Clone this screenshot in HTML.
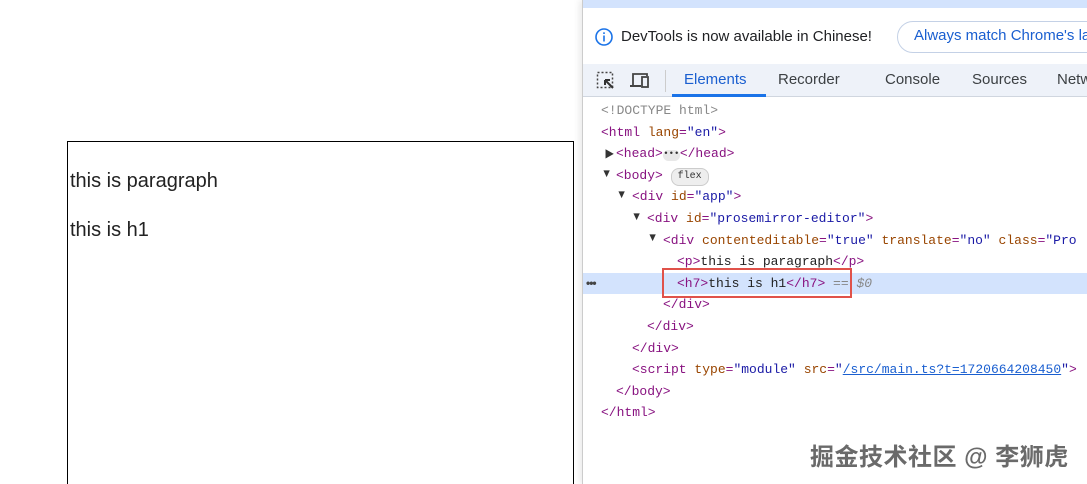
<!DOCTYPE html>
<html style="overflow:hidden"><head><style>
html,body{margin:0;width:1087px;height:484px;overflow:hidden}
body{background:#fff;position:relative;font-family:"Liberation Sans",sans-serif}
.box{position:absolute;left:67px;top:141px;width:507px;height:360px;border:1px solid #000;box-sizing:border-box}
.box p{position:absolute;left:2px;margin:0;font-size:20px;color:#222}
.dt{position:absolute;left:582px;top:0;width:505px;height:484px;background:#fff;border-left:1px solid #ccc;box-shadow:-3px 0 6px rgba(0,0,0,.08)}
.top{height:8px;background:#d3e3fd}
.info{position:absolute;top:8px;left:0;right:0;height:56px;}
.tabs{position:absolute;top:64px;left:0;right:0;height:32px;background:#eef2f9;border-bottom:1px solid #d0d6df;font-size:15px;color:#3c4043}
.tab{position:absolute;top:7px}
.code{position:absolute;left:0;top:100px;font-family:"Liberation Mono",monospace;font-size:13px;color:#881280}
.l{position:absolute;white-space:pre;height:21.6px;line-height:21.6px}
.a{color:#994500}.v{color:#1a1aa6}.g{color:#888}
.tri{position:absolute;font-size:12px;color:#333;transform:scaleX(0.9)}
.wm{position:absolute;left:810px;top:437px;font-family:"Liberation Sans","Noto Sans CJK SC",sans-serif;font-size:24px;font-weight:bold;color:#6a6a6a;text-shadow:0 0 2px #fff,0 0 2px #fff;letter-spacing:0.5px;white-space:nowrap}
</style></head><body>
<div class="box"><p style="top:28px">this is paragraph</p><p style="top:77px">this is h1</p></div>
<div class="dt">
<div class="top"></div>
<div class="info">
<svg style="position:absolute;left:12px;top:20px" width="18" height="18" viewBox="0 0 18 18"><circle cx="9" cy="9" r="8" fill="none" stroke="#1a73e8" stroke-width="1.6"/><rect x="8.2" y="7.5" width="1.6" height="6" fill="#1a73e8"/><rect x="8.2" y="4.3" width="1.6" height="1.7" fill="#1a73e8"/></svg>
<div style="position:absolute;left:38px;top:20px;font-size:15px;color:#202124">DevTools is now available in Chinese!</div>
<div style="position:absolute;left:314px;top:13px;width:220px;height:30px;border:1px solid #c4d1e6;border-radius:16px;"></div>
<div style="position:absolute;left:331px;top:19px;font-size:15px;color:#1a5fd0;white-space:nowrap">Always match Chrome's la</div>
</div>
<div class="tabs">
<svg style="position:absolute;left:13px;top:7px" width="20" height="20" viewBox="0 0 20 20"><rect x="1.5" y="1.5" width="15" height="15" fill="none" stroke="#444" stroke-width="1.5" stroke-dasharray="2 2"/><path d="M9 9 L17 17 M9 9 L9 14 M9 9 L14 9" stroke="#333" stroke-width="2" fill="none"/></svg>
<svg style="position:absolute;left:46px;top:7px" width="22" height="20" viewBox="0 0 22 20"><path d="M4 14 V3 H18 V5" stroke="#444" stroke-width="1.8" fill="none"/><path d="M1 15 H12" stroke="#444" stroke-width="2"/><rect x="13" y="6" width="6" height="10" fill="none" stroke="#444" stroke-width="1.8"/></svg>
<div style="position:absolute;left:82px;top:6px;width:1px;height:22px;background:#ccc"></div>
<div class="tab" style="left:101px;color:#1a5fd0">Elements</div>
<div style="position:absolute;left:89px;top:30px;width:94px;height:3px;background:#1a73e8"></div>
<div class="tab" style="left:195px">Recorder</div>
<div class="tab" style="left:302px">Console</div>
<div class="tab" style="left:389px">Sources</div>
<div class="tab" style="left:474px">Netw</div>
</div>
</div>
<div style="position:absolute;left:583px;top:273px;width:504px;height:21px;background:#d3e3fd"></div>
<div style="position:absolute;left:662px;top:268px;width:186px;height:26px;border:2px solid #e0524a"></div>
<div style="position:absolute;left:586px;top:276px;font-size:12px;color:#444;font-weight:bold;letter-spacing:-1px">•••</div>
<div class="code">
<div class="l g" style="left:601px;top:0">&lt;!DOCTYPE html&gt;</div>
<div class="l" style="left:601px;top:21.6px">&lt;html <span class="a">lang</span>=<span class="v">"en"</span>&gt;</div>
<div class="tri" style="left:605px;top:46px">▶</div>
<div class="l" style="left:616px;top:43.2px">&lt;head&gt;<span style="display:inline-block;width:17px;height:11px;background:#e8e8e8;border-radius:6px;font-size:9px;line-height:9px;color:#333;text-align:center;vertical-align:1px">•••</span>&lt;/head&gt;</div>
<div class="tri" style="left:603px;top:67px">▼</div>
<div class="l" style="left:616px;top:64.8px">&lt;body&gt; <span style="display:inline-block;width:36px;height:16px;line-height:16px;border:1px solid #ccc;background:#eee;border-radius:8px;font-size:10px;color:#333;text-align:center;vertical-align:1px">flex</span></div>
<div class="tri" style="left:618px;top:88px">▼</div>
<div class="l" style="left:632px;top:86.4px">&lt;div <span class="a">id</span>=<span class="v">"app"</span>&gt;</div>
<div class="tri" style="left:633px;top:110px">▼</div>
<div class="l" style="left:647px;top:108px">&lt;div <span class="a">id</span>=<span class="v">"prosemirror-editor"</span>&gt;</div>
<div class="tri" style="left:649px;top:131px">▼</div>
<div class="l" style="left:663px;top:129.6px">&lt;div <span class="a">contenteditable</span>=<span class="v">"true"</span> <span class="a">translate</span>=<span class="v">"no"</span> <span class="a">class</span>=<span class="v">"Pro</span></div>
<div class="l" style="left:677px;top:151.2px">&lt;p&gt;<span style="color:#222">this is paragraph</span>&lt;/p&gt;</div>
<div class="l" style="left:677px;top:172.8px">&lt;h7&gt;<span style="color:#222">this is h1</span>&lt;/h7&gt; <span class="g" style="font-style:italic">== $0</span></div>
<div class="l" style="left:663px;top:194.4px">&lt;/div&gt;</div>
<div class="l" style="left:647px;top:216px">&lt;/div&gt;</div>
<div class="l" style="left:632px;top:237.6px">&lt;/div&gt;</div>
<div class="l" style="left:632px;top:259.2px">&lt;script <span class="a">type</span>=<span class="v">"module"</span> <span class="a">src</span>=<span class="v">"<u style="color:#1a5fd0">/src/main.ts?t=1720664208450</u>"</span>&gt;</div>
<div class="l" style="left:616px;top:280.8px">&lt;/body&gt;</div>
<div class="l" style="left:601px;top:302.4px">&lt;/html&gt;</div>
</div>
<div class="wm">掘金技术社区 @ 李狮虎</div>
</body></html>
